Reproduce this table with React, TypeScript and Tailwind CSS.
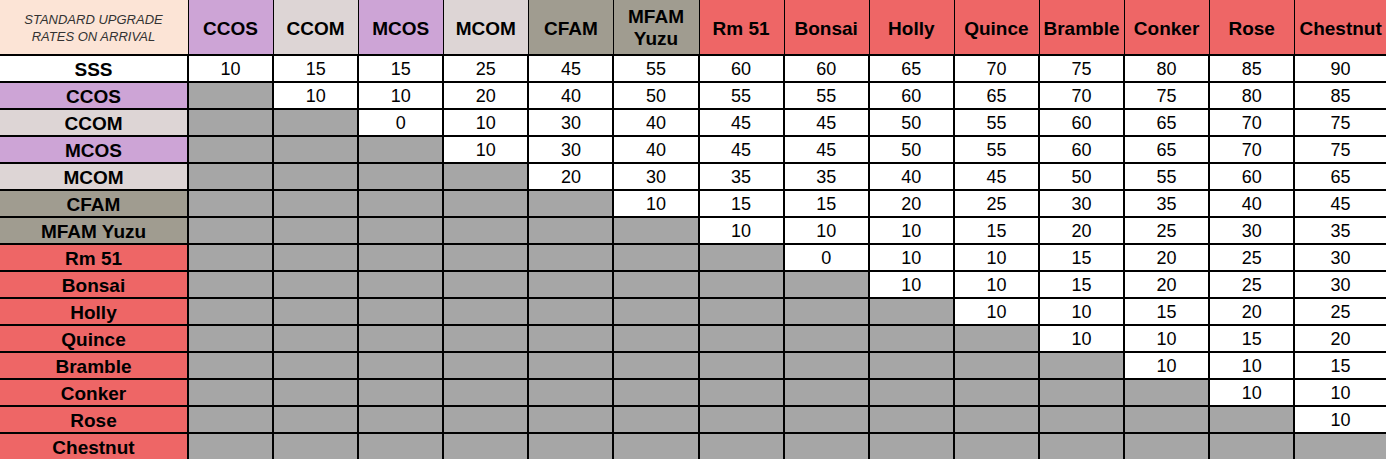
import React from "react";

const PEACH = "bg-[#fce4d6]";
const PURPLE = "bg-[#cda4d6]";
const LIGHT = "bg-[#ddd5d5]";
const TAUPE = "bg-[#a09c90]";
const RED = "bg-[#ee6666]";

type Col = { label: string; bg: string; shadow: string; two?: boolean };

const cols: Col[] = [
  { label: "CCOS", bg: PURPLE, shadow: "shadow-[1px_0_0_0_#cda4d6]" },
  { label: "CCOM", bg: LIGHT, shadow: "shadow-[1px_0_0_0_#ddd5d5]" },
  { label: "MCOS", bg: PURPLE, shadow: "shadow-[1px_0_0_0_#cda4d6]" },
  { label: "MCOM", bg: LIGHT, shadow: "shadow-[1px_0_0_0_#ddd5d5]" },
  { label: "CFAM", bg: TAUPE, shadow: "shadow-[1px_0_0_0_#a09c90]" },
  { label: "MFAM Yuzu", bg: TAUPE, shadow: "shadow-[1px_0_0_0_#a09c90]", two: true },
  { label: "Rm 51", bg: RED, shadow: "shadow-[1px_0_0_0_#ee6666]" },
  { label: "Bonsai", bg: RED, shadow: "shadow-[1px_0_0_0_#ee6666]" },
  { label: "Holly", bg: RED, shadow: "shadow-[1px_0_0_0_#ee6666]" },
  { label: "Quince", bg: RED, shadow: "shadow-[1px_0_0_0_#ee6666]" },
  { label: "Bramble", bg: RED, shadow: "shadow-[1px_0_0_0_#ee6666]" },
  { label: "Conker", bg: RED, shadow: "shadow-[1px_0_0_0_#ee6666]" },
  { label: "Rose", bg: RED, shadow: "shadow-[1px_0_0_0_#ee6666]" },
  { label: "Chestnut", bg: RED, shadow: "shadow-[1px_0_0_0_#ee6666]" },
];

type Row = { label: string; bg: string; values: number[] };

const rows: Row[] = [
  { label: "SSS", bg: "bg-white", values: [10, 15, 15, 25, 45, 55, 60, 60, 65, 70, 75, 80, 85, 90] },
  { label: "CCOS", bg: PURPLE, values: [10, 10, 20, 40, 50, 55, 55, 60, 65, 70, 75, 80, 85] },
  { label: "CCOM", bg: LIGHT, values: [0, 10, 30, 40, 45, 45, 50, 55, 60, 65, 70, 75] },
  { label: "MCOS", bg: PURPLE, values: [10, 30, 40, 45, 45, 50, 55, 60, 65, 70, 75] },
  { label: "MCOM", bg: LIGHT, values: [20, 30, 35, 35, 40, 45, 50, 55, 60, 65] },
  { label: "CFAM", bg: TAUPE, values: [10, 15, 15, 20, 25, 30, 35, 40, 45] },
  { label: "MFAM Yuzu", bg: TAUPE, values: [10, 10, 10, 15, 20, 25, 30, 35] },
  { label: "Rm 51", bg: RED, values: [0, 10, 10, 15, 20, 25, 30] },
  { label: "Bonsai", bg: RED, values: [10, 10, 15, 20, 25, 30] },
  { label: "Holly", bg: RED, values: [10, 10, 15, 20, 25] },
  { label: "Quince", bg: RED, values: [10, 10, 15, 20] },
  { label: "Bramble", bg: RED, values: [10, 10, 15] },
  { label: "Conker", bg: RED, values: [10, 10] },
  { label: "Rose", bg: RED, values: [10] },
  { label: "Chestnut", bg: RED, values: [] },
];

export default function App() {
  return (
    <div
      className="w-[1386px] h-[460px] overflow-hidden bg-white"
      style={{ fontFamily: '"Liberation Sans", Arial, sans-serif' }}
    >
      <div className="grid grid-cols-[187px_repeat(13,83.1px)_1fr] grid-rows-[54px_repeat(15,25px)] gap-[2px] bg-black w-[1386px] text-black">
        {/* header */}
        <div className={`${PEACH} shadow-[1px_0_0_0_#fce4d6] flex items-center justify-center text-center italic text-[13px] leading-[17px] text-[#333] pt-[1px]`}>
          STANDARD UPGRADE
          <br />
          RATES ON ARRIVAL
        </div>
        {cols.map((c, i) => (
          <div
            key={c.label}
            className={`${c.bg} ${i < cols.length - 1 ? c.shadow : ""} flex items-center justify-center text-center font-bold text-[19px] ${c.two ? "leading-[22px] pt-[2px]" : "leading-[22px] pt-[3px]"} whitespace-nowrap`}
          >
            {c.two ? (
              <span>
                MFAM
                <br />
                Yuzu
              </span>
            ) : (
              c.label
            )}
          </div>
        ))}
        {/* body */}
        {rows.map((r, ri) => (
          <React.Fragment key={r.label}>
            <div className={`${r.bg} flex items-center justify-center font-bold text-[19px] leading-[25px] pt-[2px] whitespace-nowrap`}>
              {r.label}
            </div>
            {cols.map((c, ci) => {
              const greyCount = ri;
              if (ci < greyCount) {
                return <div key={c.label} className="bg-[#a6a6a6]" />;
              }
              const v = r.values[ci - greyCount];
              return (
                <div
                  key={c.label}
                  className="bg-white flex items-center justify-center text-[18px] leading-[25px] pt-[2px]"
                >
                  {v}
                </div>
              );
            })}
          </React.Fragment>
        ))}
      </div>
    </div>
  );
}
